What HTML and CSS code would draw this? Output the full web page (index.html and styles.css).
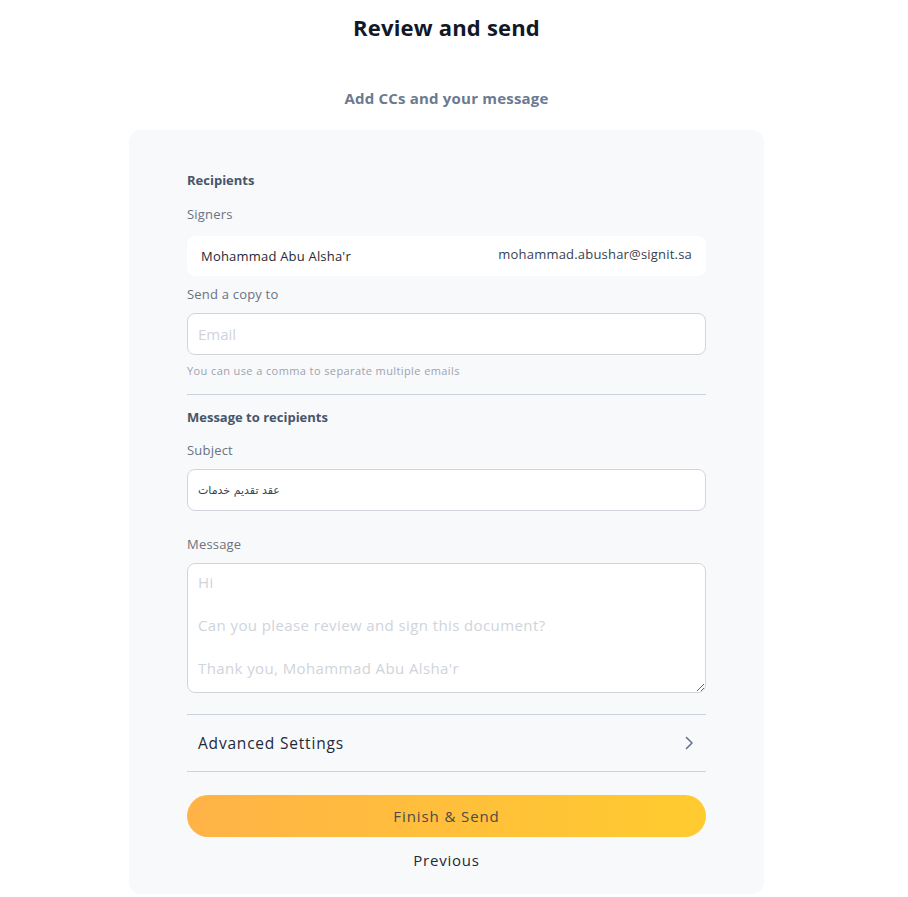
FILE: index.html
```html
<!DOCTYPE html>
<html lang="en">
<head>
    <meta charset="UTF-8">
    <meta name="viewport" content="width=device-width, initial-scale=1.0">
    <title>Review and send</title>
    <link rel="stylesheet" href="styles.css">
</head>
<body>

<div class="page">
    <h1 class="title">Review and send</h1>
    <h3 class="subtitle">Add CCs and your message</h3>

    <div class="card">
        <div class="section-title">Recipients</div>
        <div class="field-label">Signers</div>
        <div class="signer-row">
            <span class="signer-name">Mohammad Abu Alsha'r</span>
            <span class="signer-email">mohammad.abushar@signit.sa</span>
        </div>

        <label class="field-label copy-label" for="cc-email">Send a copy to</label>
        <input type="text" id="cc-email" class="text-input" placeholder="Email">
        <div class="hint">You can use a comma to separate multiple emails</div>

        <hr class="divider">

        <div class="section-title">Message to recipients</div>
        <label class="field-label subject-label" for="subject">Subject</label>
        <input type="text" id="subject" class="text-input subject-input" value="عقد تقديم خدمات">

        <label class="field-label message-label" for="message">Message</label>
        <textarea id="message" class="text-area" placeholder="Hi&#10;&#10;Can you please review and sign this document?&#10;&#10;Thank you, Mohammad Abu Alsha'r"></textarea>

        <div class="advanced">
            <span>Advanced Settings</span>
            <svg width="14" height="14" viewBox="0 0 14 14" fill="none">
                <path d="M4.5 1.5 L10 7 L4.5 12.5" stroke="#64748b" stroke-width="1.6" stroke-linecap="round" stroke-linejoin="round"/>
            </svg>
        </div>

        <button class="send-btn">Finish &amp; Send</button>
        <button class="prev-btn">Previous</button>
    </div>
</div>

</body>
</html>
```

FILE: styles.css
```css
body {
    margin: 0;
    background: #fff;
    font-family: "Open Sans", "Noto Sans", sans-serif;
    color: #1f2937;
}
.page {
    width: 893px;
    display: flex;
    flex-direction: column;
    align-items: center;
}
.title {
    margin: 12px 0 0;
    font-size: 22px;
    font-weight: 700;
    color: #111827;
    line-height: 30px;
    letter-spacing: 0.2px;
}
.subtitle {
    margin: 44px 0 0;
    font-size: 15px;
    font-weight: 700;
    color: #6b7a90;
    line-height: 24px;
    letter-spacing: 0.2px;
}
.card {
    width: 519px;
    margin: 20px 0 4px;
    padding: 40px 58px 23px;
    background: #f8f9fb;
    border-radius: 12px;
    display: flex;
    flex-direction: column;
}
.section-title {
    font-size: 13px;
    font-weight: 700;
    color: #475569;
    line-height: 20px;
}
.field-label {
    margin-top: 14px;
    font-size: 13px;
    color: #6b7280;
    line-height: 20px;
    letter-spacing: 0.2px;
}
.signer-row {
    margin-top: 12px;
    height: 40px;
    padding: 0 14px;
    background: #fff;
    border-radius: 8px;
    display: flex;
    align-items: center;
    justify-content: space-between;
    font-size: 13px;
    letter-spacing: 0.2px;
    color: #1f2937;
}
.signer-email {
    color: #374151;
    margin-top: -4px;
}
.copy-label {
    margin-top: 8px;
}
.text-input {
    margin-top: 9px;
    height: 42px;
    box-sizing: border-box;
    padding: 0 10px;
    border: 1px solid #d1d5db;
    border-radius: 8px;
    background: #fff;
    font-family: inherit;
    font-size: 15px;
    color: #374151;
    outline: none;
}
.text-input::placeholder, .text-area::placeholder {
    color: #cfd4dc;
}
.subject-input {
    font-family: "DejaVu Sans", sans-serif;
    font-size: 11px;
}
.hint {
    margin-top: 8px;
    font-size: 11px;
    color: #9ca3af;
    line-height: 16px;
    letter-spacing: 0.4px;
}
.divider {
    width: 100%;
    margin: 15px 0 12px;
    border: none;
    border-top: 1px solid #cbd2dd;
}
.subject-label {
    margin-top: 13px;
}
.message-label {
    margin-top: 23px;
}
.text-area {
    margin-top: 9px;
    height: 130px;
    box-sizing: border-box;
    padding: 8px 10px;
    border: 1px solid #d1d5db;
    border-radius: 8px;
    background: #fff;
    font-family: inherit;
    font-size: 15px;
    line-height: 21.5px;
    letter-spacing: 0.4px;
    color: #374151;
    resize: vertical;
    outline: none;
}
.advanced {
    margin-top: 21px;
    height: 56px;
    padding: 0 10px 0 11px;
    border-top: 1px solid #cbd2dd;
    border-bottom: 1px solid #cbd2dd;
    display: flex;
    align-items: center;
    justify-content: space-between;
    font-size: 15.5px;
    color: #1f2937;
    letter-spacing: 0.8px;
}
.send-btn {
    margin-top: 23px;
    height: 42px;
    border: none;
    border-radius: 21px;
    background: linear-gradient(90deg, #ffb347, #ffcb2f);
    font-family: inherit;
    font-size: 15px;
    font-weight: 500;
    letter-spacing: 0.9px;
    color: #4b4b4b;
    cursor: pointer;
}
.prev-btn {
    margin: 12px auto 0;
    border: none;
    background: none;
    font-family: inherit;
    font-size: 15px;
    letter-spacing: 0.8px;
    color: #1f2937;
    cursor: pointer;
}
```
